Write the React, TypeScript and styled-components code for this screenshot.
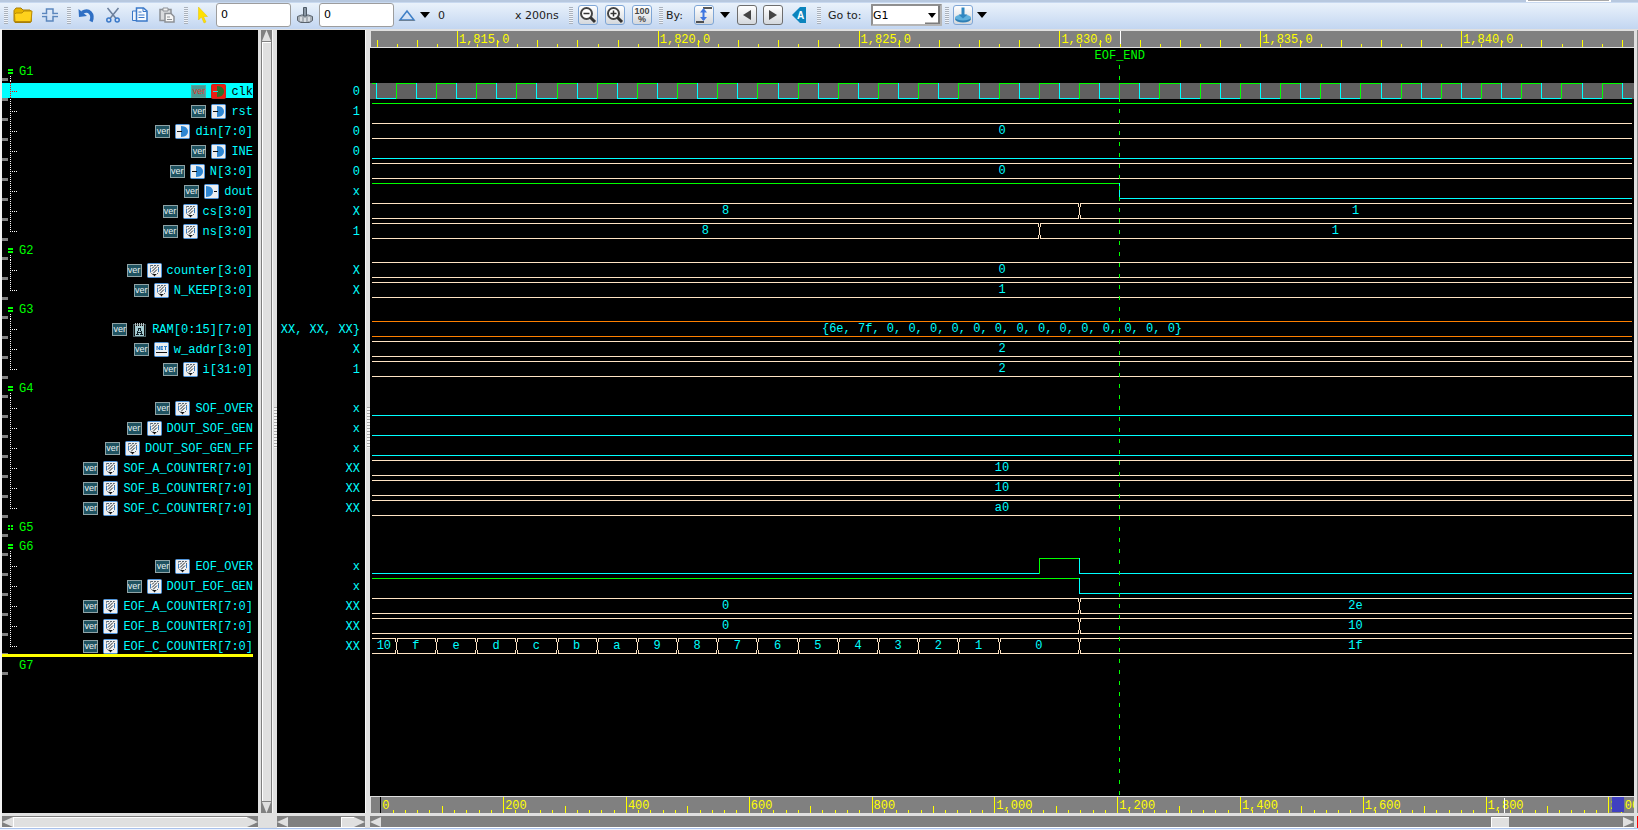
import React from "react";
import styled, { createGlobalStyle, css } from "styled-components";

const GREEN = "#00ff00";
const CYAN = "#00ffff";
const BUS = "#ffe4c4";
const ORANGE = "#ff8000";
const CHROME = "#e0e0e0";
const TROUGH = "#808080";
const YELLOW = "#ffff00";
const MONO = '"Liberation Mono", monospace';

/* ---------- data ---------- */

// Wave time is counted in clock half-periods from the 1,815,0 mark.
const T_START = -4.18;
const T_END = 58.51;
const T_SPAN = T_END - T_START;
const CURSOR = 33;

type Seg = { to: number; v: string };
type IconKind = "in" | "out" | "reg" | "mem" | "net";
type Signal = {
  kind: "signal";
  name: string;
  icon: IconKind;
  value: string;
  wave: "bit" | "bus" | "clock";
  segs: Seg[];
  color?: string;
  selected?: boolean;
  last?: boolean;
};
type Group = { kind: "group"; name: string; marker: "open" | "closed" | "none" };
type RowData = Signal | Group;

const sig = (
  name: string,
  icon: IconKind,
  value: string,
  wave: Signal["wave"],
  segs: Seg[],
  extra: Partial<Signal> = {}
): Signal => ({ kind: "signal", name, icon, value, wave, segs, ...extra });
const group = (name: string, marker: Group["marker"] = "open"): Group => ({ kind: "group", name, marker });
const flat = (v: string): Seg[] => [{ to: T_END, v }];
const step = (at: number, a: string, b: string): Seg[] => [
  { to: at, v: a },
  { to: T_END, v: b },
];

const clockSegs: Seg[] = [];
for (let k = -4; k <= 58; k++) clockSegs.push({ to: k, v: k % 2 === 0 ? "1" : "0" });
clockSegs.push({ to: T_END, v: "0" });

const countdown: Seg[] = ["10", "f", "e", "d", "c", "b", "a", "9", "8", "7", "6", "5", "4", "3", "2", "1"].map(
  (v, i) => ({ to: -3 + i * 2, v })
);

const rows: RowData[] = [
  group("G1"),
  sig("clk", "in", "0", "clock", clockSegs, { selected: true }),
  sig("rst", "in", "1", "bit", flat("1")),
  sig("din[7:0]", "in", "0", "bus", flat("0")),
  sig("INE", "in", "0", "bit", flat("0")),
  sig("N[3:0]", "in", "0", "bus", flat("0")),
  sig("dout", "out", "x", "bit", step(33, "1", "0")),
  sig("cs[3:0]", "reg", "X", "bus", step(31, "8", "1")),
  sig("ns[3:0]", "reg", "1", "bus", step(29, "8", "1"), { last: true }),
  group("G2"),
  sig("counter[3:0]", "reg", "X", "bus", flat("0")),
  sig("N_KEEP[3:0]", "reg", "X", "bus", flat("1"), { last: true }),
  group("G3"),
  sig(
    "RAM[0:15][7:0]",
    "mem",
    "XX, XX, XX}",
    "bus",
    flat("{6e, 7f, 0, 0, 0, 0, 0, 0, 0, 0, 0, 0, 0, 0, 0, 0}"),
    { color: ORANGE }
  ),
  sig("w_addr[3:0]", "net", "X", "bus", flat("2")),
  sig("i[31:0]", "reg", "1", "bus", flat("2"), { last: true }),
  group("G4"),
  sig("SOF_OVER", "reg", "x", "bit", flat("0")),
  sig("DOUT_SOF_GEN", "reg", "x", "bit", flat("0")),
  sig("DOUT_SOF_GEN_FF", "reg", "x", "bit", flat("0")),
  sig("SOF_A_COUNTER[7:0]", "reg", "XX", "bus", flat("10")),
  sig("SOF_B_COUNTER[7:0]", "reg", "XX", "bus", flat("10")),
  sig("SOF_C_COUNTER[7:0]", "reg", "XX", "bus", flat("a0"), { last: true }),
  group("G5", "closed"),
  group("G6"),
  sig("EOF_OVER", "reg", "x", "bit", [
    { to: 29, v: "0" },
    { to: 31, v: "1" },
    { to: T_END, v: "0" },
  ]),
  sig("DOUT_EOF_GEN", "reg", "x", "bit", step(31, "1", "0")),
  sig("EOF_A_COUNTER[7:0]", "reg", "XX", "bus", step(31, "0", "2e")),
  sig("EOF_B_COUNTER[7:0]", "reg", "XX", "bus", step(31, "0", "10")),
  sig("EOF_C_COUNTER[7:0]", "reg", "XX", "bus", [...countdown, { to: 31, v: "0" }, { to: T_END, v: "1f" }], {
    last: true,
  }),
  group("G7", "none"),
];

/* ---------- page ---------- */

const GlobalStyle = createGlobalStyle`
  * { box-sizing: border-box; }
  body { margin: 0; background: ${CHROME}; }
  button, input, select { font: inherit; color: inherit; margin: 0; }
`;

const Page = styled.div`
  display: flex;
  flex-direction: column;
  min-height: 100vh;
  overflow: hidden;
  font-family: "DejaVu Sans", sans-serif;
  font-size: 11px;
  color: #1c1c1c;
`;

const TopStrip = styled.div`
  display: flex;
  justify-content: flex-end;
  height: 3px;
  padding-right: 27px;
  background: #b7c8df;
  border-bottom: 1px solid #c8d9f0;
`;

const TopHandle = styled.div`
  width: 85px;
  height: 2px;
  background: #a9a9a9;
  border: solid #fff;
  border-width: 0 2px 1px;
`;

const Toolbar = styled.header`
  display: flex;
  align-items: center;
  height: 26px;
  padding: 0 0 2px 4px;
  background: linear-gradient(#eaf2fb, #c3d6f1);
`;

const ToolGroup = styled.div<{ $gap: number; $before?: number }>`
  display: flex;
  align-items: center;
  gap: ${(p) => p.$gap}px;
  margin-left: ${(p) => p.$before ?? 0}px;
`;

const Grip = styled.span`
  width: 4px;
  height: 17px;
  background: repeating-linear-gradient(#a9b1bc 0 1px, #eef3fa 1px 2px);
`;

const ToolButton = styled.button<{ $frame?: "blue" | "grey" }>`
  display: flex;
  align-items: center;
  justify-content: center;
  width: 20px;
  height: 20px;
  padding: 0;
  border: 0;
  background: none;
  ${(p) =>
    p.$frame &&
    css`
      border: 1px solid ${p.$frame === "blue" ? "#7fa6d6" : "#6d6d6d"};
      border-radius: 3px;
      background: linear-gradient(#fff, #d4d8dd);
    `}
  svg {
    flex: none;
  }
`;

const CaretButton = styled.button`
  display: flex;
  align-items: center;
  width: 11px;
  height: 20px;
  padding: 0;
  border: 0;
  background: none;
`;

const NumberBox = styled.input`
  width: 75px;
  height: 24px;
  padding: 0 4px 2px;
  color: #000;
  background: #fff;
  border: 1px solid #9d9d9d;
  border-radius: 3px;
  outline: none;
`;

const DeltaText = styled.span`
  width: 76px;
  padding-left: 3px;
`;
const UnitText = styled.span`
  width: 45px;
  white-space: nowrap;
`;
const ByLabel = styled.span`
  width: 22px;
`;
const GoLabel = styled.label`
  width: 36px;
  white-space: nowrap;
`;

const SelectBox = styled.span`
  position: relative;
  display: block;
  width: 71px;
  height: 22px;
  select {
    appearance: none;
    width: 100%;
    height: 100%;
    padding: 0 20px 0 0;
    color: #000;
    background: #fff;
    border: 2px solid #8c8c8c;
    border-color: #8f8f8f #b5b5b5 #b5b5b5 #8f8f8f;
    border-radius: 1px;
  }
  svg {
    position: absolute;
    right: 2px;
    top: 2px;
    pointer-events: none;
  }
`;

const Workspace = styled.main`
  flex: 1;
  display: grid;
  grid-template-columns: 256px 19px 88px 5px minmax(0, 1fr) 4px;
  grid-template-rows: 1fr 12px;
  row-gap: 3px;
  padding: 1px 0 0 2px;
  background: ${CHROME};
  border-bottom: 1px solid #a9c1ea;
  box-shadow: inset 2px 0 #f2f2f2;
`;

const Pane = styled.section<{ $top?: boolean }>`
  min-width: 0;
  overflow: hidden;
  background: #000;
  color: ${CYAN};
  font-family: ${MONO};
  font-size: 12px;
  ${(p) => p.$top && "padding-top: 32px;"}
`;

const RowList = styled.ul`
  list-style: none;
  margin: 0;
  padding: 0;
`;

/* ---------- names pane ---------- */

const GroupRow = styled.li`
  position: relative;
  display: flex;
  height: 19px;
  line-height: 21px;
  color: ${GREEN};
`;

const InsertBar = styled.span`
  position: absolute;
  left: 0;
  right: 5px;
  top: -2px;
  height: 3px;
  background: ${YELLOW};
`;

const SignalRow = styled.li<{ $selected?: boolean }>`
  display: flex;
  align-items: center;
  gap: 5px;
  height: 20px;
  padding: 0 5px 0 0;
  white-space: pre;
  ${(p) =>
    p.$selected &&
    css`
      color: #000;
      background: linear-gradient(${CYAN}, ${CYAN}) 0 2px / calc(100% - 5px) 15px no-repeat;
    `}
`;

const SignalName = styled.span`
  align-self: flex-start;
  height: 20px;
  line-height: 22px;
`;

const TreeSvg = styled.svg`
  flex: none;
  align-self: flex-start;
  display: block;
`;

const Spacer = styled.span`
  flex: 1;
`;

const Badge = styled.span<{ $selected?: boolean }>`
  display: flex;
  align-items: center;
  justify-content: center;
  width: 15px;
  height: 13px;
  border: 1px solid #8fa3a6;
  background: #1f5260;
  color: #e8f0f0;
  font: 9px/10px "Liberation Sans", sans-serif;
  ${(p) =>
    p.$selected &&
    css`
      background: #4a9a94;
      border-color: #5fa39d;
      color: #d83a2c;
    `}
`;

const KindIcon = styled.svg`
  flex: none;
`;

/* ---------- values pane ---------- */

const ValueRow = styled.li<{ $group?: boolean }>`
  height: ${(p) => (p.$group ? 19 : 20)}px;
  padding-right: 5px;
  line-height: 23px;
  text-align: right;
  white-space: pre;
`;

/* ---------- wave pane ---------- */

const WavePane = styled(Pane)`
  display: flex;
  flex-direction: column;
  border-top: 1px solid ${CHROME};
`;

const Ruler = styled.svg`
  flex: none;
  display: block;
  width: 100%;
  height: 16px;
  overflow: hidden;
  background: ${TROUGH};
  border-left: 1px solid ${CHROME};
  fill: ${YELLOW};
  text {
    font-family: ${MONO};
    font-size: 12px;
  }
`;

const RulerFrame = styled.div`
  flex: none;
  padding: 0 2px;
  background: ${TROUGH};
  border-left: 1px solid ${CHROME};
  svg {
    overflow: visible;
    border-left: 0;
  }
`;

const WaveArea = styled.div`
  position: relative;
  flex: 1;
  padding-top: 14px;
  border: solid ${CHROME};
  border-width: 1px 0;
`;

const WaveRow = styled.li<{ $grey?: boolean; $cols: string }>`
  display: grid;
  grid-template-columns: ${(p) => p.$cols};
  height: 16px;
  margin: 0 0 4px;
  padding: 0 2px;
  background: ${(p) => (p.$grey ? "#606060" : "none")};
`;

const WaveGap = styled.li`
  height: 19px;
`;

const WaveList = styled(RowList)`
  padding-top: 2px;
`;

const BitSegment = styled.span<{ $high: boolean; $edge: boolean }>`
  border: 0 solid ${(p) => (p.$high ? GREEN : CYAN)};
  border-top-width: ${(p) => (p.$high ? 1 : 0)}px;
  border-bottom-width: ${(p) => (p.$high ? 0 : 1)}px;
  border-left-width: ${(p) => (p.$edge ? 1 : 0)}px;
`;

const BusSegment = styled.span<{ $color: string }>`
  position: relative;
  border: solid ${(p) => p.$color};
  border-width: 1px 0;
  line-height: 14px;
  text-align: center;
  white-space: pre;
`;

const CrossSvg = styled.svg`
  position: absolute;
  left: -1px;
  top: -1px;
  background: #000;
`;

const CursorMark = styled.div`
  position: absolute;
  top: 0;
  bottom: 0;
  left: calc(2px + (100% - 4px) * ${(CURSOR - T_START) / T_SPAN});
  width: 1px;
  display: flex;
  flex-direction: column;
  align-items: center;
  color: ${GREEN};
  line-height: 17px;
  pointer-events: none;
`;

const CursorLine = styled.span`
  flex: 1;
  width: 1px;
  background: repeating-linear-gradient(${GREEN} 0 4px, transparent 4px 11px);
`;

/* ---------- scroll bars and dividers ---------- */

const Gutter = styled.div`
  display: flex;
  padding-left: 3px;
`;

const VScroll = styled.div`
  display: flex;
  flex-direction: column;
  width: 11px;
  background: ${TROUGH};
  padding: 0 1px;
`;

const VThumb = styled.div`
  flex: 1;
  margin: 1px 0;
  background: ${CHROME};
  border: solid #fff;
  border-width: 1px 0 0 1px;
`;

const Divider = styled.div`
  flex: 1;
  display: flex;
  align-items: center;
  justify-content: center;
  border-left: 1px solid #f8f8f8;
`;

const DividerGrip = styled.span`
  width: 3px;
  height: 41px;
  margin-top: 12px;
  background: repeating-linear-gradient(#a8a8a8 0 1px, #f4f4f4 1px 3px);
`;

const HScroll = styled.div`
  display: flex;
  align-items: center;
  height: 12px;
  background: ${TROUGH};
  border-bottom: 1px solid #fff;
`;

const HThumb = styled.div<{ $size?: number }>`
  ${(p) => (p.$size ? `width: ${p.$size}px;` : "flex: 1;")}
  height: 10px;
  background: ${CHROME};
  border: solid #fff;
  border-width: 1px 0 0 1px;
`;

const HSpace = styled.div<{ $grow: number }>`
  flex: ${(p) => p.$grow};
`;

const RightEdge = styled.div`
  border-right: 1px solid #8c8c8c;
`;

const ScrollRightEdge = styled(RightEdge)`
  border-right-color: #ff0000;
`;

const BottomStrip = styled.div`
  height: 1px;
  background: #edf3ff;
`;

const Arrow = ({ dir }: { dir: "up" | "down" | "left" | "right" }) => {
  const pts = {
    up: "5,0 10,10 0,10",
    down: "0,0 10,0 5,10",
    left: "0,5 10,0 10,10",
    right: "0,0 10,5 0,10",
  }[dir];
  const vertical = dir === "up" || dir === "down";
  return (
    <svg width={vertical ? 9 : 11} height={vertical ? 11 : 10} viewBox="0 0 10 10" preserveAspectRatio="none">
      <polygon points={pts} fill={CHROME} />
    </svg>
  );
};

/* ---------- row icons ---------- */

const SignalIcon = ({ kind, selected }: { kind: IconKind; selected?: boolean }) => {
  if (kind === "mem")
    return (
      <KindIcon width="15" height="15" viewBox="0 0 15 15" shapeRendering="crispEdges">
        <rect x="1.5" y="2.5" width="12" height="12" fill="#111" stroke="#4c6468" />
        <path d="M3 1v3M5 1v3M7 1v3M9 1v3M11 1v3" stroke="#b9c4c4" />
        <path d="M3 4h9v10h-9z" fill="#a7cdd2" />
        <path d="M5 12l2-6h1l2 6M6 10h3" stroke="#102028" fill="none" />
        <path d="M4 12.500h3M8 12.500h3" stroke="#102028" />
      </KindIcon>
    );
  return (
    <KindIcon width="15" height="15" viewBox="0 0 15 15">
      <rect x=".5" y=".5" width="14" height="14" rx="1" fill={selected ? "#ee1c12" : "#eceff2"} stroke={selected ? "#c8241c" : "#4f93d8"} />
      {kind === "in" && (
        <>
          <path d="M6 2c5 0 7 3 7 5.500s-2 5.500-7 5.500z" fill={selected ? "#2c6f28" : "#2f86d2"} />
          <path d="M2 7.500h5" stroke={selected ? "#28e0e0" : "#111"} />
        </>
      )}
      {kind === "out" && (
        <>
          <path d="M2 2c5 0 7 3 7 5.500s-2 5.500-7 5.500z" fill="#2f86d2" />
          <path d="M10 7.500h3" stroke="#111" />
        </>
      )}
      {kind === "reg" && (
        <>
          <path d="M4 2.500h7.500v7l-2 2h-4l-2-2v-7z" fill="#f2f4f5" stroke="#59656e" strokeDasharray="2 1" />
          <path d="M5 8.500l5-5M6 10.500l4-4M5 5.500l2-2" stroke="#22282c" />
          <path d="M5.500 11h4l-2 2.500z" fill="#111" />
          <path d="M3.500 5v4M11.500 5v4" stroke="#3a7cc0" />
        </>
      )}
      {kind === "net" && (
        <>
          <path d="M3 8V4l2.500 4V4M7 4v4M7 4.500h2M7 6h2M7 7.500h2M10 4.500h3M11.500 4v4" stroke="#2f7fcb" fill="none" />
          <path d="M2 10.500h11" stroke="#111" strokeWidth="1" />
        </>
      )}
    </KindIcon>
  );
};

const SignalTree = ({ s }: { s: Signal }) => {
  const c = s.selected ? "#ff0000" : "#fff";
  return (
    <TreeSvg width="18" height="20" shapeRendering="crispEdges">
      <path d={s.last ? "M8.500 0V11" : "M8.500 0V20"} stroke="#fff" strokeDasharray="1 1" />
      {s.selected && (
        <>
          <rect x="8" y="2" width="1" height="15" fill={CYAN} />
          <path d="M8.500 2V17" stroke={c} strokeDasharray="1 1" />
        </>
      )}
      <path d="M10 10.500H16" stroke={c} strokeDasharray="1 1" />
      <rect x="0" y="17" width="6" height="3" fill={TROUGH} />
    </TreeSvg>
  );
};

const GroupTree = ({ g }: { g: Group }) => (
  <TreeSvg width="17" height="19" shapeRendering="crispEdges">
    {g.marker === "open" && <path d="M6 8h5M6 11h5" stroke={GREEN} strokeWidth="2" />}
    {g.marker === "open" && <path d="M8.500 14V19" stroke="#fff" strokeDasharray="1 1" />}
    {g.marker === "closed" && <path d="M6 8h2M9 8h2M6 11h2M9 11h2" stroke={GREEN} strokeWidth="2" />}
    <rect x="0" y="16" width="6" height="3" fill={TROUGH} />
  </TreeSvg>
);

/* ---------- waves ---------- */

const BusCross = ({ color }: { color: string }) => (
  <CrossSvg width="3" height="16" shapeRendering="crispEdges">
    <path d="M.5 0V4M2.500 0V4M1.500 4V12M.5 12V16M2.500 12V16" stroke={color} fill="none" />
  </CrossSvg>
);

const Wave = ({ s }: { s: Signal }) => {
  const cols = s.segs
    .map((g, i) => `minmax(0, ${(g.to - (i ? s.segs[i - 1].to : T_START)).toFixed(2)}fr)`)
    .join(" ");
  return (
    <WaveRow $cols={cols} $grey={s.wave === "clock"}>
      {s.segs.map((g, i) =>
        s.wave === "bus" ? (
          <BusSegment key={i} $color={s.color ?? BUS}>
            {i > 0 && <BusCross color={s.color ?? BUS} />}
            {g.v}
          </BusSegment>
        ) : (
          <BitSegment key={i} $high={g.v === "1"} $edge={i > 0} />
        )
      )}
    </WaveRow>
  );
};

const WaveRuler = () => {
  const ticks = [];
  for (let k = -4; k <= 58; k++) {
    const x = `${(((k - T_START) / T_SPAN) * 100).toFixed(3)}%`;
    const major = ((k % 10) + 10) % 10 === 0;
    const h = major ? 16 : k % 2 === 0 ? 7 : 3;
    ticks.push(<rect key={k} x={x} y={16 - h} width="1" height={h} shapeRendering="crispEdges" />);
    if (major)
      ticks.push(
        <text key={`t${k}`} x={x} dx="2" y="12">
          {`1,${815 + k / 2},0`}
        </text>
      );
  }
  return (
    <RulerFrame>
      <Ruler>
        {ticks}
        <rect x={`${((CURSOR - T_START) / T_SPAN) * 100}%`} y="0" width="1" height="13" fill="#fff" shapeRendering="crispEdges" />
      </Ruler>
    </RulerFrame>
  );
};

const OverviewRuler = () => {
  const span = 102.85;
  const at = (n: number) => `${(((n + 0.76) / span) * 100).toFixed(3)}%`;
  const ticks = [];
  for (let n = 0; n <= 101; n++) {
    const major = n % 10 === 0;
    const h = major ? 16 : n % 5 === 0 ? 7 : 3;
    ticks.push(
      <rect key={n} x={at(n)} y={16 - h} width="1" height={h} fill={n === 0 ? "#000" : YELLOW} shapeRendering="crispEdges" />
    );
    if (major)
      ticks.push(
        <text key={`t${n}`} x={at(n)} dx="2" y="12">
          {(n * 20).toLocaleString("en-US")}
        </text>
      );
  }
  return (
    <Ruler>
      {ticks}
      <rect x={at(91.5)} y="1" width="1" height="15" fill="#fff" shapeRendering="crispEdges" />
      <rect x={at(100.3)} y="0" width="12" height="15" fill="#4040c0" />
    </Ruler>
  );
};

/* ---------- toolbar icons ---------- */

const Icon = ({ children, size = 20 }: { children: React.ReactNode; size?: number }) => (
  <svg width={size} height={size} viewBox="0 0 20 20" fill="none">
    {children}
  </svg>
);

const Caret = () => (
  <svg width="10" height="6" viewBox="0 0 10 6">
    <path d="M0 0h10L5 6z" fill="#000" />
  </svg>
);

const MAGNIFIER = (
  <>
    <circle cx="8.500" cy="8.500" r="5.500" fill="#fff" stroke="#444" strokeWidth="2" />
    <path d="M12.500 12.500l4.500 4.500" stroke="#333" strokeWidth="3" />
  </>
);

export default function App() {
  return (
    <>
      <GlobalStyle />
      <Page>
        <TopStrip>
          <TopHandle />
        </TopStrip>
        <Toolbar>
          <ToolGroup $gap={7}>
            <ToolGroup $gap={5}>
              <Grip />
              <ToolButton aria-label="Open">
                <Icon>
                  <path d="M1 5.500L3 3h5l2 2h7l1.500 2v9l-1 1.500H2L1 16z" fill="#e8b400" stroke="#a87f08" />
                  <path d="M1.500 9.500L3 8h6l2-2h8l-1 10.500H2z" fill="#ffd21c" stroke="#b98c0a" />
                </Icon>
              </ToolButton>
            </ToolGroup>
            <ToolButton aria-label="Add signals">
              <Icon>
                <path d="M2 8.500H6.500V4H13V8.500H18" stroke="#5b86bd" strokeWidth="1.500" />
                <path d="M2 11.500H6.500V16H13V11.500H18" stroke="#5b86bd" strokeWidth="1.500" />
                <path d="M2 10H6M14 10H18" stroke="#dbe6f4" />
              </Icon>
            </ToolButton>
          </ToolGroup>
          <ToolGroup $gap={6} $before={7}>
            <Grip />
            <ToolGroup $gap={7}>
              <ToolButton aria-label="Undo">
                <Icon>
                  <path d="M5 7.500C12 3.500 17 9 14 16.500" stroke="#2f6fc4" strokeWidth="3.500" />
                  <path d="M1.500 4L2 12l8-1z" fill="#2f6fc4" />
                </Icon>
              </ToolButton>
              <ToolButton aria-label="Cut">
                <Icon>
                  <path d="M3.500 3L12 13.500M14.500 3L6 13.500" stroke="#6b7f9c" strokeWidth="1.500" />
                  <circle cx="4.800" cy="15" r="2" stroke="#3a78c8" strokeWidth="1.500" />
                  <circle cx="13.200" cy="15" r="2" stroke="#3a78c8" strokeWidth="1.500" />
                </Icon>
              </ToolButton>
              <ToolButton aria-label="Copy">
                <Icon>
                  <path d="M1.500 6h8v9.500h-8z" fill="#eef4fc" stroke="#3a78c8" />
                  <path d="M5.500 3h7l3.500 3v10h-10.500z" fill="#f6faff" stroke="#3a78c8" strokeWidth="1.500" />
                  <path d="M12 3v3.500h3.500M7.500 7h3M7.500 10h6M7.500 12.500h6" stroke="#3a78c8" />
                </Icon>
              </ToolButton>
              <ToolButton aria-label="Paste">
                <Icon>
                  <path d="M2 4.500h11v11h-11z" fill="#d9dbde" stroke="#8d9196" strokeWidth="1.500" />
                  <path d="M5 3h5v3h-5z" fill="#f2f2f2" stroke="#8d9196" />
                  <path d="M7 8.500h6l3 3v5.500h-9z" fill="#f7f7f7" stroke="#8d9196" strokeWidth="1.500" />
                  <path d="M9 12h3M9 14.500h5" stroke="#8d9196" />
                </Icon>
              </ToolButton>
            </ToolGroup>
          </ToolGroup>
          <ToolGroup $gap={4} $before={6}>
            <Grip />
            <ToolButton aria-label="Cursor">
              <Icon>
                <path d="M6.500 2v13l3-3 2.500 6 2-1L11.500 11.500h4z" fill="#ffe100" stroke="#e8c000" strokeWidth=".5" />
              </Icon>
            </ToolButton>
            <NumberBox aria-label="Cursor time" defaultValue="0" />
            <ToolButton aria-label="Marker">
              <Icon>
                <path d="M2.500 11.500l4-1.500h7l4 1.500v4l-3 2h-9l-3-2z" fill="#a9b0b8" stroke="#59626c" />
                <path d="M6 12v4M10 13v4M14 12v4" stroke="#e6eaee" strokeWidth="1.500" />
                <path d="M8.500 2.500h3V11h-3z" fill="#8a97a5" stroke="#4e5a67" />
              </Icon>
            </ToolButton>
            <NumberBox aria-label="Marker time" defaultValue="0" />
            <ToolGroup $gap={2}>
              <ToolButton aria-label="Delta">
                <Icon>
                  <path d="M2 15L9 6l7 9z" stroke="#3e7fc6" strokeWidth="1.500" />
                  <path d="M1 15.500h15.500" stroke="#6b8096" />
                </Icon>
              </ToolButton>
              <CaretButton aria-label="Delta menu">
                <Caret />
              </CaretButton>
            </ToolGroup>
            <DeltaText>0</DeltaText>
            <UnitText>x 200ns</UnitText>
          </ToolGroup>
          <ToolGroup $gap={5} $before={9}>
            <Grip />
            <ToolGroup $gap={7}>
              <ToolButton $frame="blue" aria-label="Zoom out">
                <Icon>
                  {MAGNIFIER}
                  <path d="M5.500 8.500h6" stroke="#333" strokeWidth="1.500" />
                </Icon>
              </ToolButton>
              <ToolButton $frame="blue" aria-label="Zoom in">
                <Icon>
                  {MAGNIFIER}
                  <path d="M5.500 8.500h6M8.500 5.500v6" stroke="#333" strokeWidth="1.500" />
                </Icon>
              </ToolButton>
              <ToolButton $frame="blue" aria-label="Zoom to fit">
                <svg width="18" height="18" viewBox="0 0 18 18" fill="#444" fontFamily="Liberation Sans, sans-serif" fontWeight="700" textAnchor="middle">
                  <text x="9" y="8" fontSize="9">
                    100
                  </text>
                  <text x="9" y="16" fontSize="9">
                    %
                  </text>
                </svg>
              </ToolButton>
            </ToolGroup>
          </ToolGroup>
          <ToolGroup $gap={6} $before={7}>
            <ToolGroup $gap={3}>
              <Grip />
              <ByLabel>By:</ByLabel>
            </ToolGroup>
            <ToolButton $frame="blue" aria-label="Any edge">
              <Icon>
                <path d="M2 17h8M9 3h9" stroke="#222" strokeWidth="1.500" />
                <path d="M9.500 5v10" stroke="#3f76e0" strokeWidth="2" />
                <path d="M9.500 3l3.500 4.500h-7zM9.500 16l3.500-4h-7z" fill="#3f76e0" />
              </Icon>
            </ToolButton>
            <CaretButton aria-label="Edge menu">
              <Caret />
            </CaretButton>
            <ToolButton $frame="grey" aria-label="Previous edge">
              <Icon>
                <path d="M14 5v10L6 10z" fill="#444" />
              </Icon>
            </ToolButton>
            <ToolButton $frame="grey" aria-label="Next edge">
              <Icon>
                <path d="M6 5v10l8-5z" fill="#444" />
              </Icon>
            </ToolButton>
            <ToolButton aria-label="Annotate">
              <svg width="20" height="20" viewBox="0 0 20 20">
                <path d="M17 2v16h-6L3 10l8-8z" fill="#0b84bd" />
                <text x="8" y="14" fontSize="10" fontWeight="700" fill="#fff" fontFamily="Liberation Sans, sans-serif">
                  A
                </text>
              </svg>
            </ToolButton>
          </ToolGroup>
          <ToolGroup $gap={7} $before={8}>
            <Grip />
            <GoLabel htmlFor="goto">Go to:</GoLabel>
            <SelectBox>
              <select id="goto" defaultValue="G1">
                {rows.map((r) => r.kind === "group" && <option key={r.name}>{r.name}</option>)}
              </select>
              <svg width="15" height="18" viewBox="0 0 15 18">
                <path d="M0 0h15v18H0z" fill="#fff" />
                <path d="M14 0v17.500H0" stroke="#7d7d7d" strokeWidth="2" fill="none" />
                <path d="M3 7h8l-4 5z" fill="#000" />
              </svg>
            </SelectBox>
          </ToolGroup>
          <ToolGroup $gap={4} $before={3}>
            <Grip />
            <ToolButton $frame="blue" aria-label="Bookmark">
              <Icon>
                <ellipse cx="10" cy="14" rx="8" ry="3.500" fill="#2e7fb5" />
                <ellipse cx="10" cy="12.500" rx="8" ry="3" fill="#5fb0dd" />
                <path d="M8.500 2.500h3v7h3L10 13.500 5.500 9.500h3z" fill="#2f86c0" />
              </Icon>
            </ToolButton>
            <CaretButton aria-label="Bookmark menu">
              <Caret />
            </CaretButton>
          </ToolGroup>
        </Toolbar>

        <Workspace>
          <Pane $top aria-label="Signals">
            <RowList>
              {rows.map((r) =>
                r.kind === "group" ? (
                  <GroupRow key={r.name}>
                    {r.marker === "none" && <InsertBar />}
                    <GroupTree g={r} />
                    {r.name}
                  </GroupRow>
                ) : (
                  <SignalRow key={r.name} $selected={r.selected}>
                    <SignalTree s={r} />
                    <Spacer />
                    <Badge $selected={r.selected}>ver</Badge>
                    <SignalIcon kind={r.icon} selected={r.selected} />
                    <SignalName>{r.name}</SignalName>
                  </SignalRow>
                )
              )}
            </RowList>
          </Pane>
          <Gutter>
            <VScroll>
              <Arrow dir="up" />
              <VThumb />
              <Arrow dir="down" />
            </VScroll>
            <Divider>
              <DividerGrip />
            </Divider>
          </Gutter>
          <Pane $top aria-label="Values">
            <RowList>
              {rows.map((r) =>
                r.kind === "group" ? (
                  <ValueRow key={r.name} $group />
                ) : (
                  <ValueRow key={r.name}>{r.value}</ValueRow>
                )
              )}
            </RowList>
          </Pane>
          <Divider>
            <DividerGrip />
          </Divider>
          <WavePane aria-label="Waveforms">
            <WaveRuler />
            <WaveArea>
              <WaveList>
                {rows.map((r) => (r.kind === "group" ? <WaveGap key={r.name} /> : <Wave key={r.name} s={r} />))}
              </WaveList>
              <CursorMark>
                EOF_END
                <CursorLine />
              </CursorMark>
            </WaveArea>
            <OverviewRuler />
          </WavePane>
          <RightEdge />

          <HScroll>
            <Arrow dir="left" />
            <HThumb />
            <Arrow dir="right" />
          </HScroll>
          <span />
          <HScroll>
            <Arrow dir="left" />
            <HSpace $grow={1} />
            <HThumb $size={13} />
            <Arrow dir="right" />
          </HScroll>
          <span />
          <HScroll>
            <Arrow dir="left" />
            <HSpace $grow={1112} />
            <HThumb $size={18} />
            <HSpace $grow={114} />
            <Arrow dir="right" />
          </HScroll>
          <ScrollRightEdge />
        </Workspace>
        <BottomStrip />
      </Page>
    </>
  );
}
